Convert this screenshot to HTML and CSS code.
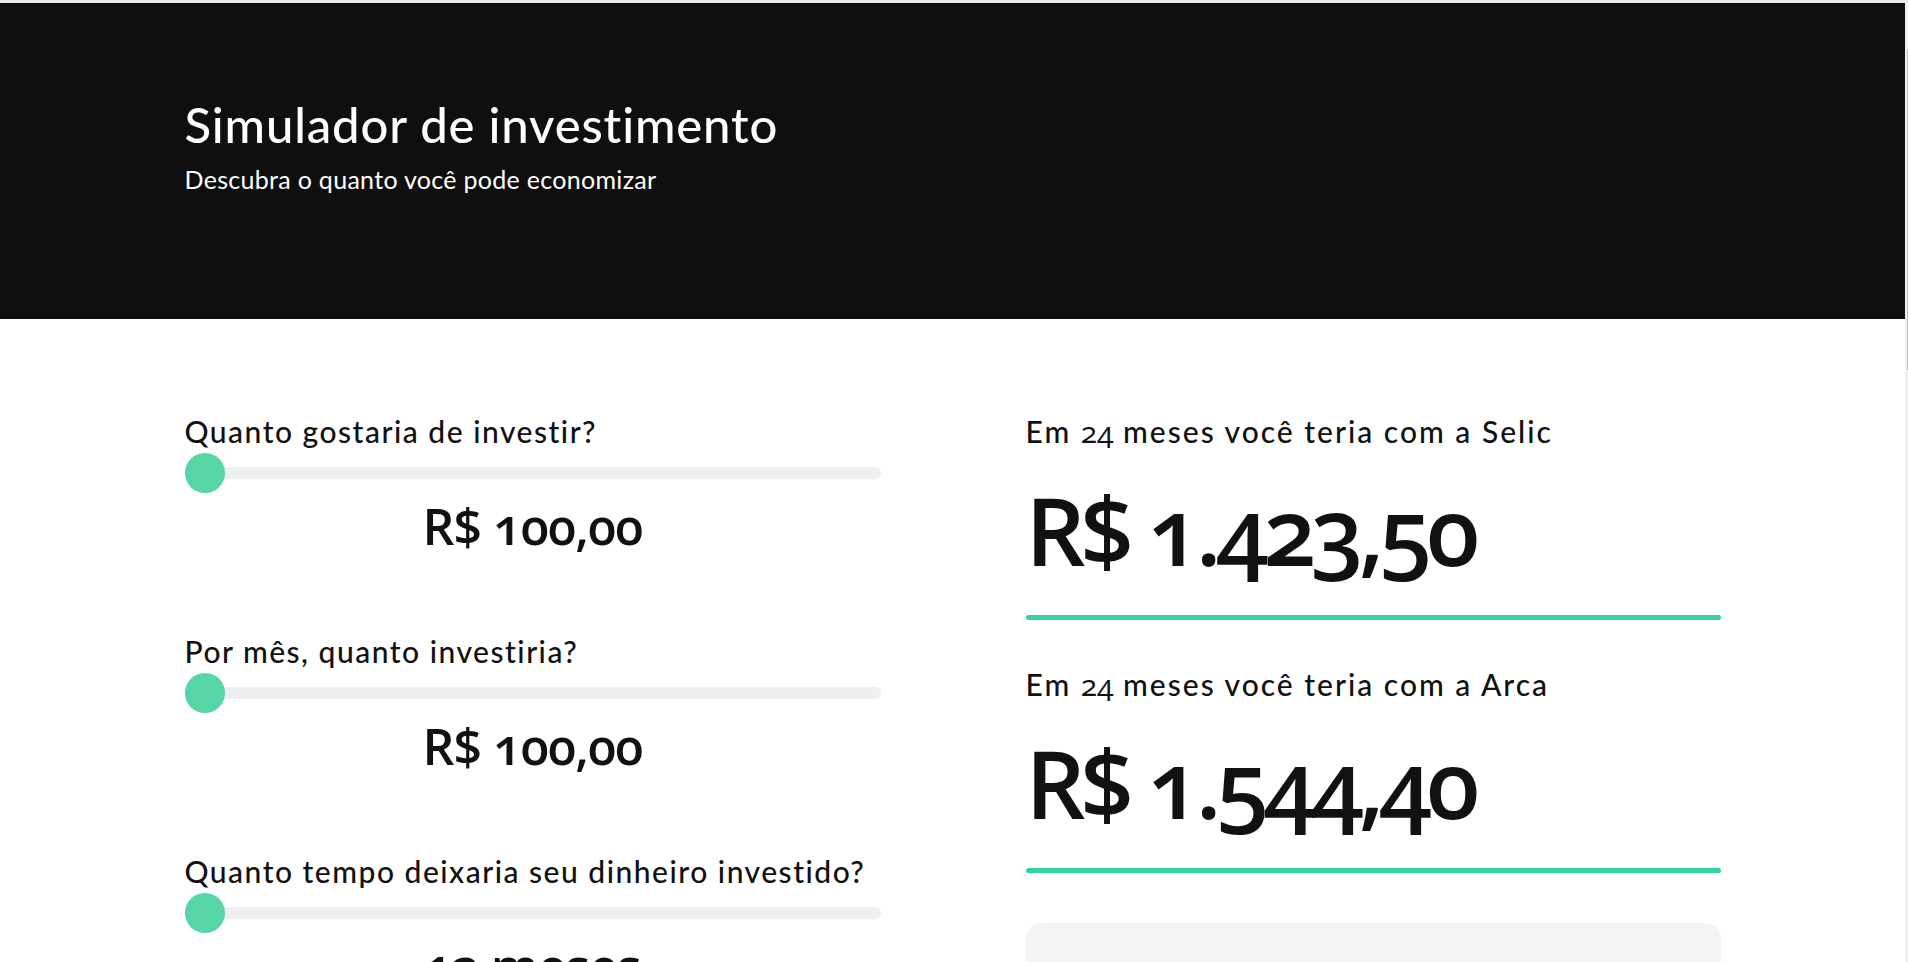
FILE: index.html
```html
<!DOCTYPE html>
<html lang="pt-BR">
<head>
<meta charset="utf-8">
<title>Simulador de investimento</title>
<link rel="stylesheet" href="styles.css">
</head>
<body>
<div class="frame">
  <div class="page">
    <header class="hero">
      <div class="container">
        <h1 class="hero-title">Simulador de investimento</h1>
        <p class="hero-sub">Descubra o quanto você pode economizar</p>
      </div>
    </header>
    <main class="container sim">
      <section class="inputs">
        <div class="field">
          <label class="field-label">Quanto gostaria de investir?</label>
          <div class="range"><span class="range-thumb"></span></div>
          <div class="field-value">R$ 100,00</div>
        </div>
        <div class="field">
          <label class="field-label">Por mês, quanto investiria?</label>
          <div class="range"><span class="range-thumb"></span></div>
          <div class="field-value">R$ 100,00</div>
        </div>
        <div class="field">
          <label class="field-label">Quanto tempo deixaria seu dinheiro investido?</label>
          <div class="range"><span class="range-thumb"></span></div>
          <div class="field-value">12 meses</div>
        </div>
      </section>
      <section class="results">
        <div class="result">
          <h2 class="result-label">Em <span class="num">24</span> meses você teria com a Selic</h2>
          <div class="result-amount">R$ 1.423,50</div>
          <div class="result-bar"></div>
        </div>
        <div class="result">
          <h2 class="result-label">Em <span class="num">24</span> meses você teria com a Arca</h2>
          <div class="result-amount">R$ 1.544,40</div>
          <div class="result-bar"></div>
        </div>
        <div class="note">
          <h3 class="note-title">uma economia na comparação</h3>
          <p class="note-text">Com a Arca você ganharia R$ 120,90 a mais do que deixando o dinheiro na Selic.</p>
        </div>
      </section>
    </main>
  </div>
  <div class="scrollbar"><div class="scrollbar-thumb"></div></div>
</div>
</body>
</html>
```
FILE: styles.css
```css
* { box-sizing: border-box; }
html, body { margin: 0; padding: 0; }
body {
  font-family: "Lato", "Open Sans", sans-serif;
  color: #111111;
  background: #ffffff;
  font-variant-numeric: oldstyle-nums;
}
.frame {
  display: flex;
  height: 100vh;
  overflow: hidden;
  border-top: 3px solid #e9e9e9;
}
.page {
  flex: 1;
  min-width: 0;
}
.scrollbar {
  width: 3px;
  background: #f0f0f0;
  display: flex;
  justify-content: flex-end;
}
.scrollbar-thumb {
  width: 1px;
  height: 321px;
  margin-top: 46px;
  background: #c2c2c2;
}
.container {
  max-width: 1536px;
  margin: 0 auto;
}
.hero {
  background: #0f0f0f;
  color: #ffffff;
  height: 316px;
  padding-top: 92px;
}
.hero-title {
  margin: 0;
  font-size: 49px;
  font-weight: 500;
  line-height: 1.2;
  letter-spacing: 0.85px;
}
.hero-sub {
  margin: 0;
  margin-top: 10px;
  font-size: 25px;
  font-weight: 400;
  line-height: 30px;
  letter-spacing: 0.3px;
}
.sim {
  display: grid;
  grid-template-columns: 696px 695px;
  column-gap: 145px;
  padding-top: 95px;
}
.inputs {
  display: flex;
  flex-direction: column;
  gap: 84px;
}
.field {
  display: flex;
  flex-direction: column;
}
.field-label {
  font-size: 30px;
  font-weight: 500;
  line-height: 34px;
  letter-spacing: 1.5px;
}
.range {
  position: relative;
  margin-top: 5px;
  height: 40px;
  display: flex;
  align-items: center;
}
.range::before {
  content: "";
  flex: 1;
  height: 12px;
  border-radius: 6px;
  background: #efefef;
}
.range-thumb {
  position: absolute;
  left: 0;
  top: 0;
  width: 40px;
  height: 40px;
  border-radius: 50%;
  background: #56d6a4;
}
.field-value {
  margin-top: 9px;
  text-align: center;
  font-family: "Open Sans", "Lato", sans-serif;
  font-size: 50px;
  font-weight: 600;
  line-height: 48px;
  letter-spacing: -0.8px;
}
.results {
  display: flex;
  flex-direction: column;
  gap: 47px;
}
.result {
  display: flex;
  flex-direction: column;
}
.result-label {
  margin: 0;
  font-size: 30px;
  font-weight: 500;
  line-height: 34px;
  letter-spacing: 2px;
}
.num {
  font-family: "Open Sans", "Lato", sans-serif;
  font-weight: 500;
  letter-spacing: 0;
  line-height: 0;
}
.result-amount {
  margin-top: 35px;
  font-family: "Open Sans", "Lato", sans-serif;
  font-size: 94px;
  font-weight: 600;
  line-height: 94px;
  letter-spacing: -5.2px;
}
.result-bar {
  margin-top: 38px;
  height: 5px;
  border-radius: 3px;
  background: #34d399;
}
.note {
  margin-top: 3px;
  background: #f4f4f4;
  border-radius: 16px;
  padding: 36px 40px;
  text-align: center;
}
.note-title {
  margin: 0;
  font-size: 28px;
  font-weight: 600;
  line-height: 34px;
}
.note-text {
  margin: 12px 0 0;
  font-size: 18px;
}
```
